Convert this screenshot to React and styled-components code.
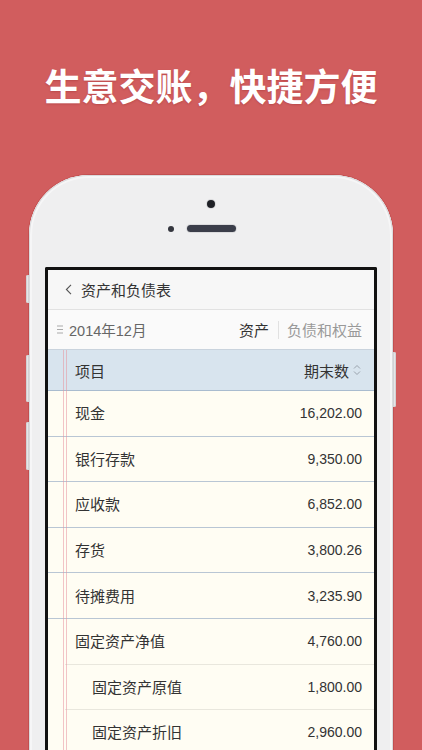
import styled, { createGlobalStyle } from 'styled-components';

const GlobalStyle = createGlobalStyle`
    html, body {
        margin: 0;
        padding: 0;
        background: #d15d5e;
    }
    body {
        font-family: "Liberation Sans", "Noto Sans CJK SC", sans-serif;
        -webkit-font-smoothing: antialiased;
    }
`;

const Page = styled.div`
    height: 750px;
    overflow: hidden;
    background: #d15d5e;
`;

const Headline = styled.h1`
    margin: 0;
    padding-top: 63px;
    height: 112px;
    text-align: center;
    font-family: "Noto Sans CJK SC", sans-serif;
    font-weight: 700;
    font-size: 37px;
    line-height: 44px;
    color: #ffffff;
    text-shadow: 0 1px 2px rgba(120, 20, 20, 0.25);
`;

const Phone = styled.div`
    position: relative;
    width: 364px;
    height: 620px;
    margin-left: 29px;
    box-sizing: border-box;
    display: flex;
    flex-direction: column;
    background: #efeff0;
    border-radius: 60px 60px 0 0;
    box-shadow: inset 0 0 0 1px #dadadc, inset 0 0 0 3px #f6f6f7, 0 0 0 1px rgba(150, 40, 40, 0.25);
`;

const SideButton = styled.div`
    position: absolute;
    top: ${(p) => p.$top}px;
    ${(p) => (p.$right ? 'right: -3px;' : 'left: -3px;')}
    width: 3px;
    height: ${(p) => p.$h}px;
    background: #e6e6e8;
    border-radius: ${(p) => (p.$right ? '0 2px 2px 0' : '2px 0 0 2px')};
    box-shadow: inset 0 0 0 1px #d2d2d4;
`;

const Face = styled.div`
    height: 92px;
    flex: none;
    display: flex;
    flex-direction: column;
    align-items: center;
    padding-top: 25px;
    box-sizing: border-box;
`;

const Camera = styled.div`
    width: 8px;
    height: 8px;
    border-radius: 50%;
    background: #1e2026;
    box-shadow: 0 0 0 1px #d9d9db;
`;

const EarRow = styled.div`
    display: flex;
    align-items: center;
    gap: 13px;
    margin-top: 17px;
    padding-right: 19px;
`;

const Sensor = styled.div`
    width: 6px;
    height: 6px;
    border-radius: 50%;
    background: #34363e;
`;

const Speaker = styled.div`
    width: 49px;
    height: 7px;
    border-radius: 4px;
    background: #3b3e4a;
    box-shadow: 0 0 0 1px #dcdcde;
`;

const Screen = styled.div`
    flex: 1;
    margin: 0 16px;
    border: 3px solid #111;
    border-bottom: none;
    border-radius: 2px 2px 0 0;
    overflow: hidden;
    display: flex;
    flex-direction: column;
    background: #fffdf3;
`;

const NavBar = styled.div`
    height: 40px;
    flex: none;
    display: flex;
    align-items: center;
    padding-left: 17px;
    gap: 9px;
    background: #f7f7f7;
    border-bottom: 1px solid #e2e2e2;
    box-sizing: border-box;
`;

const NavTitle = styled.span`
    font-family: "Noto Sans CJK SC", sans-serif;
    font-size: 15px;
    line-height: 20px;
    color: #333;
`;

const Toolbar = styled.div`
    height: 40px;
    flex: none;
    display: flex;
    align-items: center;
    padding: 0 12px 0 9px;
    background: #fafafa;
    border-bottom: 1px solid #c9d3dd;
    box-sizing: border-box;
`;

const Period = styled.div`
    display: flex;
    align-items: center;
    gap: 6px;
    font-size: 14.5px;
    color: #666;
`;

const Tabs = styled.div`
    margin-left: auto;
    display: flex;
    align-items: center;
`;

const Tab = styled.span`
    font-family: "Noto Sans CJK SC", sans-serif;
    font-size: 15px;
    line-height: 20px;
    color: ${(p) => (p.$active ? '#333' : '#999')};
`;

const TabDivider = styled.span`
    width: 1px;
    height: 18px;
    margin: 0 8px 0 9px;
    background: #e1e1e1;
`;

const Table = styled.div`
    position: relative;
    flex: 1;
    &::before,
    &::after {
        content: "";
        position: absolute;
        top: 0;
        bottom: 0;
        width: 1px;
        background: rgba(232, 150, 160, 0.55);
    }
    &::before { left: 15px; }
    &::after { left: 18px; }
`;

const HeadRow = styled.div`
    height: 41px;
    display: flex;
    align-items: center;
    padding: 0 13px 0 27px;
    background: #d8e4ee;
    border-bottom: 1px solid #a9bccf;
    box-sizing: border-box;
    font-family: "Noto Sans CJK SC", sans-serif;
    font-size: 15px;
    color: #333;
`;

const SortLabel = styled.div`
    margin-left: auto;
    display: flex;
    align-items: center;
    gap: 4px;
`;

const Row = styled.div`
    height: 45.6px;
    display: flex;
    align-items: center;
    padding: 0 12px 0 ${(p) => (p.$sub ? 44 : 27)}px;
    box-sizing: border-box;
    border-bottom: 1px solid ${(p) => (p.$light ? '#e9e7dd' : '#b9c6d4')};
    ${(p) => p.$light && 'border-image: linear-gradient(to right, transparent 18px, #e9e7dd 18px) 1;'}
`;

const Label = styled.span`
    font-family: "Noto Sans CJK SC", sans-serif;
    font-size: 15px;
    line-height: 20px;
    color: #333;
`;

const Amount = styled.span`
    margin-left: auto;
    font-size: 14px;
    color: #333;
`;

const rows = [
    { name: '现金', value: '16,202.00' },
    { name: '银行存款', value: '9,350.00' },
    { name: '应收款', value: '6,852.00' },
    { name: '存货', value: '3,800.26' },
    { name: '待摊费用', value: '3,235.90' },
    { name: '固定资产净值', value: '4,760.00', light: true },
    { name: '固定资产原值', value: '1,800.00', sub: true, light: true },
    { name: '固定资产折旧', value: '2,960.00', sub: true, light: true },
];

const Chevron = () => (
    <svg width="7" height="11" viewBox="0 0 7 11">
        <path d="M6 0.8 L1.4 5.5 L6 10.2" fill="none" stroke="#555" strokeWidth="1.1" />
    </svg>
);

const Menu = () => (
    <svg width="6" height="9" viewBox="0 0 6 9">
        <path d="M0 1 H6 M0 4.5 H6 M0 8 H6" stroke="#aaa" strokeWidth="1" />
    </svg>
);

const Sort = () => (
    <svg width="8" height="12" viewBox="0 0 8 12">
        <path d="M1 4.5 L4 1.5 L7 4.5 M1 7.5 L4 10.5 L7 7.5" fill="none" stroke="#9aa3ad" strokeWidth="1" />
    </svg>
);

const App = () => {
    return (
        <Page>
            <GlobalStyle />
            <Headline>生意交账，快捷方便</Headline>
            <Phone>
                <SideButton $top={100} $h={28} />
                <SideButton $top={180} $h={47} />
                <SideButton $top={247} $h={48} />
                <SideButton $right $top={177} $h={55} />
                <Face>
                    <Camera />
                    <EarRow>
                        <Sensor />
                        <Speaker />
                    </EarRow>
                </Face>
                <Screen>
                    <NavBar>
                        <Chevron />
                        <NavTitle>资产和负债表</NavTitle>
                    </NavBar>
                    <Toolbar>
                        <Period>
                            <Menu />
                            <span>2014年12月</span>
                        </Period>
                        <Tabs>
                            <Tab $active>资产</Tab>
                            <TabDivider />
                            <Tab>负债和权益</Tab>
                        </Tabs>
                    </Toolbar>
                    <Table>
                        <HeadRow>
                            <span>项目</span>
                            <SortLabel>
                                <span>期末数</span>
                                <Sort />
                            </SortLabel>
                        </HeadRow>
                        {rows.map((r) => (
                            <Row key={r.name} $sub={r.sub} $light={r.light}>
                                <Label>{r.name}</Label>
                                <Amount>{r.value}</Amount>
                            </Row>
                        ))}
                    </Table>
                </Screen>
            </Phone>
        </Page>
    );
};

export default App;
